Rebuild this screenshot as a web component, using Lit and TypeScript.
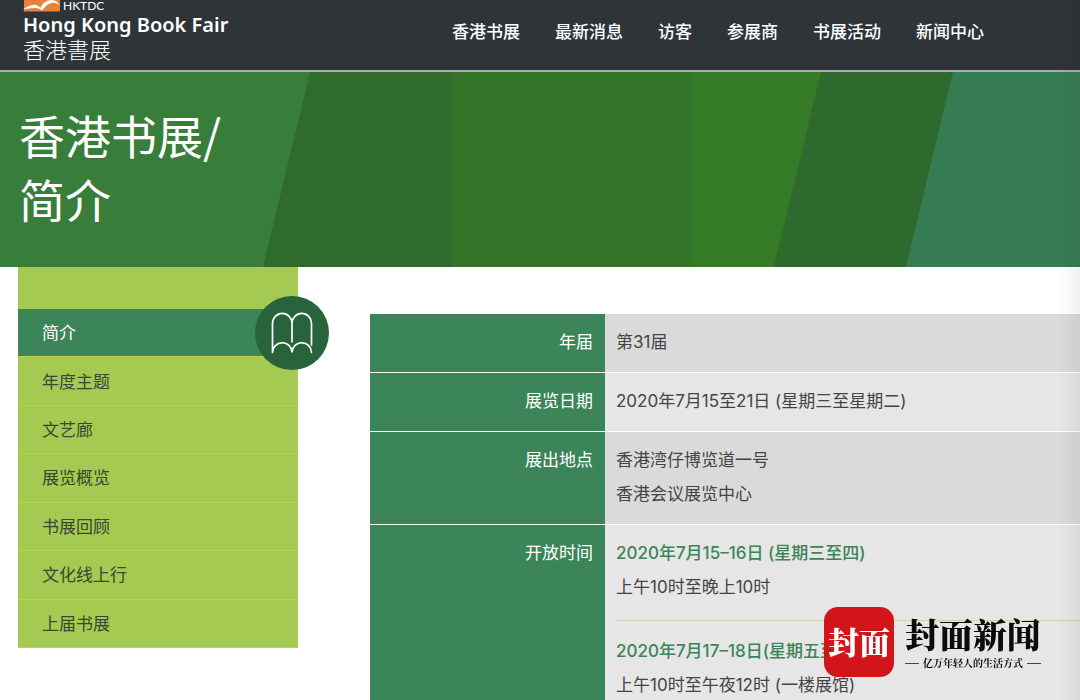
import { LitElement, html, css, svg } from "lit";
import { customElement } from "lit/decorators.js";
import { classMap } from "lit/directives/class-map.js";

const NAV = ["香港书展", "最新消息", "访客", "参展商", "书展活动", "新闻中心"];
const SIDE = ["简介", "年度主题", "文艺廊", "展览概览", "书展回顾", "文化线上行", "上届书展"];

const bands = svg`
  <rect width="1080" height="195" fill="#387e3a"></rect>
  <path d="M310 0H460V195H263Z" fill="#2f6b2d"></path>
  <rect x="452" width="242" height="195" fill="#347429"></rect>
  <rect x="693" width="140" height="195" fill="#357a25"></rect>
  <path d="M821 0H960V195H774Z" fill="#2e6a2d"></path>
  <path d="M953 0H1080V195H906Z" fill="#367c53"></path>
`;

@customElement("app-root")
export class AppRoot extends LitElement {
  static styles = css`
    :host {
      display: block;
      position: relative;
      min-height: 100vh;
      overflow: hidden;
      background: #fff;
      color: #444;
      font-family: Inter, "Noto Sans CJK SC", sans-serif;
      font-size: 17px;
    }
    * {
      box-sizing: border-box;
    }
    a {
      color: inherit;
      text-decoration: none;
    }
    ul {
      list-style: none;
      margin: 0;
      padding: 0;
    }
    .header {
      display: flex;
      justify-content: space-between;
      height: 72px;
      padding: 0 96px 0 23px;
      background: #2f3438;
      border-bottom: 2px solid #a9adae;
      color: #fff;
    }
    .brand {
      display: flex;
      flex-direction: column;
      white-space: nowrap;
    }
    .org {
      display: flex;
      align-items: flex-start;
      gap: 3px;
      height: 13px;
      font-family: Lato, sans-serif;
      font-size: 12px;
      line-height: 12px;
    }
    .mark {
      display: block;
      width: 37px;
      height: 12px;
    }
    .name {
      font-family: "Noto Sans", sans-serif;
      font-weight: 600;
      font-size: 20px;
      line-height: 24px;
    }
    .cname {
      font-family: "Noto Sans CJK TC", sans-serif;
      font-weight: 300;
      font-size: 22px;
      line-height: 22px;
    }
    .nav {
      display: flex;
      gap: 35px;
      height: 60px;
      align-items: center;
      font-weight: 500;
      white-space: nowrap;
    }
    .hero {
      position: relative;
      padding: 30px 19px 37px;
      color: #fff;
    }
    .bands {
      position: absolute;
      inset: 0;
      width: 100%;
      height: 100%;
    }
    .title {
      position: relative;
      margin: 0;
      font-family: "Noto Sans CJK SC", sans-serif;
      font-weight: 400;
      font-size: 46px;
      line-height: 64px;
    }
    .main {
      display: flex;
      align-items: flex-start;
      gap: 72px;
      padding-left: 18px;
    }
    .side {
      flex: 0 0 280px;
      padding-top: 42px;
      background: #a4ca51;
    }
    .menu {
      display: grid;
      grid-auto-rows: 1fr;
      min-height: 339px;
    }
    .item {
      position: relative;
      display: flex;
      align-items: center;
      padding: 0 24px 2px;
      border-bottom: 1px solid #b4d64f;
      color: #3c4632;
    }
    .active {
      background: #3c8558;
      color: #fff;
    }
    .badge {
      position: absolute;
      right: -31px;
      top: -13px;
      width: 74px;
      height: 74px;
    }
    .content {
      flex: 1;
      min-width: 0;
      padding-top: 47px;
    }
    .facts {
      width: 100%;
      border-collapse: separate;
      border-spacing: 0;
      line-height: 34px;
    }
    .facts th,
    .facts td {
      padding: 11px 12px 13px 11px;
      border-bottom: 1px solid #fff;
      vertical-align: top;
    }
    .facts th {
      width: 235px;
      background: #3c8558;
      color: #fff;
      font-weight: 400;
      text-align: right;
    }
    .facts td {
      background: #e6e6e6;
    }
    .facts tr:nth-child(odd) td {
      background: #dadada;
    }
    .facts .hours {
      padding-right: 0;
    }
    .slot + .slot {
      margin-top: 16px;
      padding-top: 13px;
      border-top: 1px solid #c9d8a0;
    }
    .date {
      color: #3c8558;
      font-weight: 500;
    }
    .fade {
      position: absolute;
      top: 0;
      right: 0;
      bottom: 0;
      width: 22px;
      background: linear-gradient(to right, transparent, rgba(0, 0, 0, 0.05));
      pointer-events: none;
    }
    .stamp {
      position: fixed;
      right: 39px;
      bottom: 23px;
      display: flex;
      align-items: center;
      gap: 11px;
      white-space: nowrap;
      color: #0c0c0c;
      font-family: "Noto Serif CJK SC", "Noto Sans CJK SC", serif;
      font-weight: 900;
    }
    .seal {
      width: 70px;
      height: 70px;
      border-radius: 14px;
      background: #d2151b;
      color: #fff;
      font-size: 31px;
      line-height: 68px;
      text-align: center;
    }
    .press {
      font-size: 34px;
      line-height: 42px;
    }
    .motto {
      display: flex;
      align-items: center;
      gap: 4px;
      font-size: 10px;
      line-height: 16px;
      font-weight: 700;
    }
    .motto::before,
    .motto::after {
      content: "";
      flex: 1;
      height: 1px;
      background: #444;
    }
  `;

  render() {
    return html`
      <header class="header">
        <a class="brand" href="#">
          <span class="org">
            <svg class="mark" viewBox="0 0 37 12" aria-hidden="true">
              <rect x="1" width="36" height="11.5" fill="#e8813a"></rect>
              <path
                d="M0 9.5C4 7 8 4 13 5C15 5.500 16.500 6.500 17.500 8C19 3 24 0 29 0C33 0 35 3 37 5.500C33 2.500 30 2 26 4C23 5.500 21 8 19 10.500C14 6.500 8 8.500 0 9.500Z"
                fill="#fff"
              ></path>
            </svg>
            <span>HKTDC</span>
          </span>
          <span class="name">Hong Kong Book Fair</span>
          <span class="cname" lang="zh-Hant">香港書展</span>
        </a>
        <nav class="nav">${NAV.map((t) => html`<a href="#">${t}</a>`)}</nav>
      </header>

      <section class="hero">
        <svg class="bands" viewBox="0 0 1080 195" preserveAspectRatio="none" aria-hidden="true">
          ${bands}
        </svg>
        <h1 class="title">香港书展/<br />简介</h1>
      </section>

      <main class="main">
        <nav class="side">
          <ul class="menu">
            ${SIDE.map(
              (t, i) => html`<li class=${classMap({ item: true, active: i === 0 })}>
                <a href="#">${t}</a>
                ${i === 0
                  ? html`<svg class="badge" viewBox="0 0 74 74" aria-hidden="true">
                      <circle cx="37" cy="37" r="37" fill="#29633c"></circle>
                      <path
                        d="M17.5 56.5V27.2a9.750 9.750 0 0 1 19.500 0V45.700M37 27.200a9.750 9.750 0 0 1 19.500 0V49M17.500 56.500a9.750 9.750 0 0 1 19.500 0a9.750 9.750 0 0 1 19.500 0"
                        fill="none"
                        stroke="#fff"
                        stroke-width="1.700"
                        stroke-linecap="round"
                      ></path>
                    </svg>`
                  : ""}
              </li>`
            )}
          </ul>
        </nav>

        <section class="content">
          <table class="facts">
            <tbody>
              <tr>
                <th scope="row">年届</th>
                <td>第31届</td>
              </tr>
              <tr>
                <th scope="row">展览日期</th>
                <td>2020年7月15至21日 (星期三至星期二)</td>
              </tr>
              <tr>
                <th scope="row">展出地点</th>
                <td>香港湾仔博览道一号<br />香港会议展览中心</td>
              </tr>
              <tr>
                <th scope="row">开放时间</th>
                <td class="hours">
                  <div class="slot">
                    <div class="date">2020年7月15–16日 (星期三至四)</div>
                    <div>上午10时至晚上10时</div>
                  </div>
                  <div class="slot">
                    <div class="date">2020年7月17–18日(星期五至六)</div>
                    <div>上午10时至午夜12时 (一楼展馆)</div>
                  </div>
                </td>
              </tr>
            </tbody>
          </table>
        </section>
      </main>

      <div class="fade"></div>
      <aside class="stamp">
        <div class="seal">封面</div>
        <div>
          <div class="press">封面新闻</div>
          <div class="motto">亿万年轻人的生活方式</div>
        </div>
      </aside>
    `;
  }
}
